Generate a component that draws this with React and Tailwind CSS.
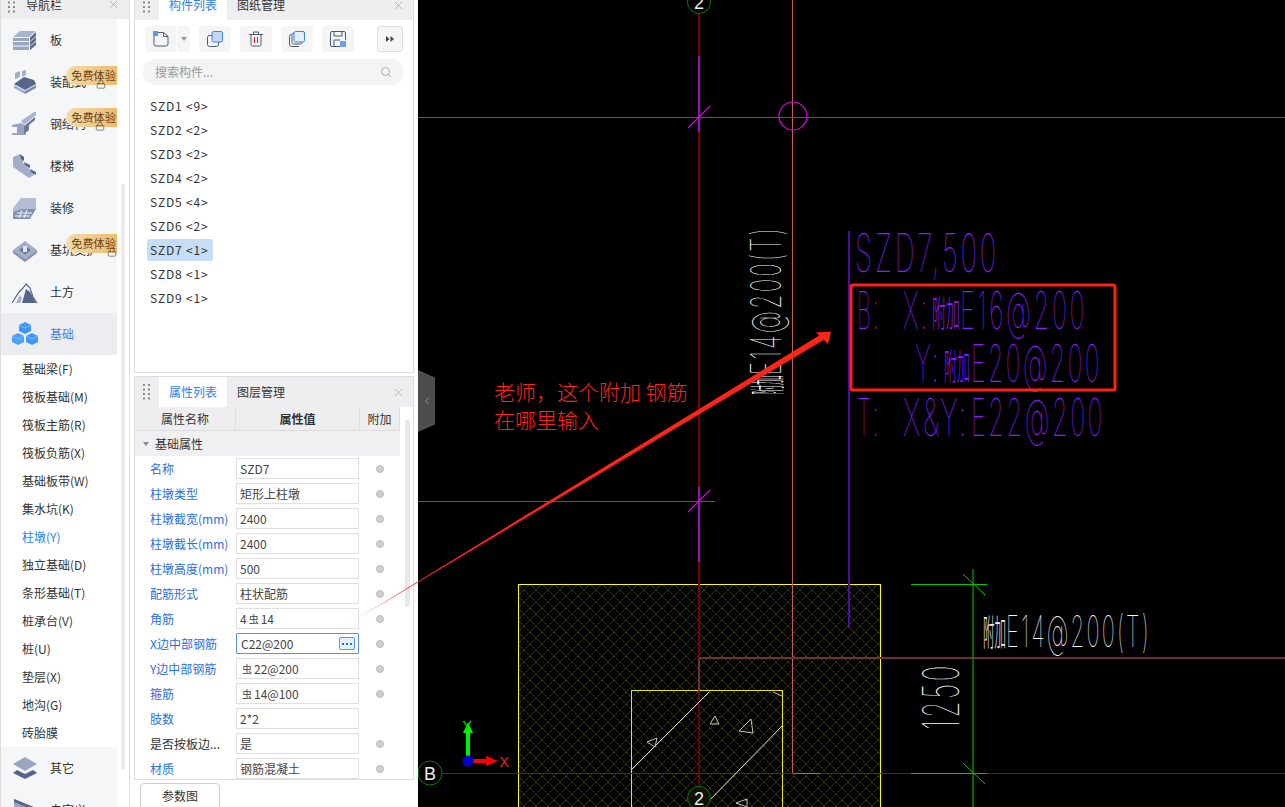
import React from "react";
import { Search, X, ChevronLeft, Lock } from "lucide-react";

const Grip = () => (
  <svg width="8" height="16" viewBox="0 0 8 16" className="shrink-0">
    {[1, 5.5, 10, 14.5].map((y) =>
      [1, 6].map((x) => <rect key={x + "-" + y} x={x} y={y - 1} width="2" height="2" fill="#8a8a8a" />)
    )}
  </svg>
);

const Ico = ({ children }) => (
  <svg width="26" height="24" viewBox="0 0 26 24" className="shrink-0">{children}</svg>
);

const icons = {
  slab: (
    <Ico>
      <path d="M1 9 L8 3 H24 L17 9Z" fill="#a9b3cd" />
      <path d="M1 10H17V13H1ZM1 14H17V17.5H1ZM1 18.5H17V22H1Z" fill="#9aa5c2" />
      <path d="M18 9.5 L24 4V8L18 13.5ZM18 14L24 9V12.5L18 18ZM18 18.5L24 13.500V17L18 22Z" fill="#5e6c92" />
    </Ico>
  ),
  prefab: (
    <Ico>
      <path d="M3 3 L8 1 V7 L3 9ZM10 1 L14 0 V5 L10 7Z" fill="#a4aec9" />
      <path d="M2 14 L12 7 L22 10 L24 14 L13 20Z" fill="#56658c" />
      <path d="M2 15 L13 21 V24 L2 18Z" fill="#a4aec9" />
      <path d="M13 21 L24 15 V18 L13 24Z" fill="#7f8cae" />
    </Ico>
  ),
  steel: (
    <Ico>
      <path d="M9 9 L22 0 H24 L24 3 L12 13 Z" fill="#aab4cd" />
      <path d="M0 13 L9 11 L12 13 V21 H14 L14 23 H0 V21 H5 V15 H0Z" fill="#98a3c0" />
      <path d="M12 14 L23 5 V8 L17 13 V18 L12 22Z" fill="#6b7899" />
    </Ico>
  ),
  stairs: (
    <Ico>
      <path d="M1 3 L8 0 L11 5 L11 9 L17 12 V15 L22 18 V21 L17 24 L1 13Z" fill="#a4aec9" />
      <path d="M8 0 L12 3 V7 L9 5ZM12 8 L18 11 V14 L13 11ZM18 15 L24 18 V21 L19 18Z" fill="#56658c" />
    </Ico>
  ),
  finish: (
    <Ico>
      <path d="M9 2 H24 V14 H10 L1 20 V12 Z" fill="#b3bcd3" />
      <path d="M1 16 L10 13 H24 L18 23 H1Z" fill="#8490b0" />
      <path d="M5 17 H20 M3 20 H18 M10 14 L7 22 M15 14 L12 22" stroke="#f5f6f8" strokeWidth="1" fill="none" />
    </Ico>
  ),
  pit: (
    <Ico>
      <path d="M1 12 L13 3 L25 12 L13 21Z" fill="#a4aec9" />
      <path d="M1 12 V15 L13 24 V21ZM25 12 V15 L13 24 V21Z" fill="#8591b2" />
      <path d="M7 12 L13 7.500 L19 12 L13 16.500Z" fill="#6a7799" />
      <path d="M11 8 H15 V14 H11Z" fill="#dfe3ec" />
    </Ico>
  ),
  earth: (
    <Ico>
      <path d="M0 23 L7 12 L11 8 L14 4 L18 8 L21 17 L25 23" fill="none" stroke="#56658c" strokeWidth="1.2" />
      <path d="M10 23 L14 9 L18 12 L24 23Z" fill="#56658c" />
      <path d="M4 23 L8 15 L10 18 L8 23Z" fill="#a4aec9" />
    </Ico>
  ),
  base: (
    <Ico>
      <path d="M13 0 L19 3 V9 L13 12 L7 9 V3Z" fill="#3f95ff" />
      <path d="M6 11 L12 14 V20 L6 23 L0 20 V14Z" fill="#4aa0ff" />
      <path d="M20 11 L26 14 V20 L20 23 L14 20 V14Z" fill="#3f95ff" />
      <path d="M7 3 L13 6 L19 3 M0 14 L6 17 L12 14 M14 14 L20 17 L26 14" stroke="#8cc4ff" strokeWidth="0.8" fill="none" />
    </Ico>
  ),
  other: (
    <Ico>
      <path d="M13 1 L25 8 L13 15 L1 8Z" fill="#9aa5c2" />
      <path d="M5 14 L13 18 L21 14 L25 17 L13 23 L1 17Z" fill="#56658c" />
    </Ico>
  ),
  custom: (
    <Ico>
      <path d="M2 1 L24 10 V24 H2Z" fill="#9aa5c2" />
      <path d="M2 1 L24 10 V13 L2 4Z" fill="#56658c" />
    </Ico>
  ),
};

const Badge = ({ top, lockLeft, lockTop }) => (
  <>
    <span className="absolute left-[65px] w-[51px] h-[19px] pr-[1px] rounded-l-[10px] bg-gradient-to-r from-[#f2dcae] to-[#ecba6c] text-[11.2px] leading-[19px] text-[#6b4310] text-right whitespace-nowrap overflow-hidden" style={{ top }}>
      免费体验
    </span>
    <span className="absolute w-[9px] h-[10px] text-[#444]" style={{ left: lockLeft, top: lockTop }}>
      <Lock size={10} strokeWidth={1.5} />
    </span>
  </>
);

const NavRow = ({ icon, label, active }) => (
  <div className={"flex items-center h-[42px] w-[116px] pl-[11px] gap-[12px] text-[12px] " + (active ? "bg-[#ecedf0] text-[#4a7fe8]" : "bg-[#f5f6f8] text-[#333]")}>
    {icons[icon]}
    <span className="whitespace-nowrap leading-[16px]">{label}</span>
  </div>
);

const subItems = ["基础梁(F)", "筏板基础(M)", "筏板主筋(R)", "筏板负筋(X)", "基础板带(W)", "集水坑(K)", "柱墩(Y)", "独立基础(D)", "条形基础(T)", "桩承台(V)", "桩(U)", "垫层(X)", "地沟(G)", "砖胎膜"];

const Header = ({ a, b }) => (
  <div className="flex items-center h-[30px] bg-[#eeeef0] shrink-0">
    <div className="pl-[7px] w-[24px]"><Grip /></div>
    <div className="w-[68px] h-full bg-white text-[#2f80ed] text-[12px] leading-[30px] text-center">{a}</div>
    <div className="ml-[10px] text-[12px] text-[#333] leading-[30px]">{b}</div>
    <X size={13} strokeWidth={1.2} className="ml-auto mr-[8px] text-[#999]" />
  </div>
);

const TB = ({ children }) => (
  <div className="w-[32px] h-[26px] rounded-[4px] bg-[#f5f5f5] flex items-center justify-center">{children}</div>
);

const list = ["SZD1 <9>", "SZD2 <2>", "SZD3 <2>", "SZD4 <2>", "SZD5 <4>", "SZD6 <2>", "SZD7 <1>", "SZD8 <1>", "SZD9 <1>"];

const Rebar = () => <span className="inline-block text-[10px] leading-[10px] align-[3px] mx-[2px]">虫</span>;

const rows = [
  ["名称", "SZD7", 1, 1],
  ["柱墩类型", "矩形上柱墩", 1, 1],
  ["柱墩截宽(mm)", "2400", 1, 1],
  ["柱墩截长(mm)", "2400", 1, 1],
  ["柱墩高度(mm)", "500", 1, 1],
  ["配筋形式", "柱状配筋", 1, 1],
  ["角筋", <>4<Rebar />14</>, 1, 1],
  ["X边中部钢筋", "C22@200", 1, 1, true],
  ["Y边中部钢筋", <><Rebar />22@200</>, 1, 1],
  ["箍筋", <><Rebar />14@100</>, 1, 1],
  ["肢数", "2*2", 1, 0],
  ["是否按板边...", "是", 0, 1],
  ["材质", "钢筋混凝土", 1, 1],
];

const Row = ({ r }) => (
  <div className="flex items-center h-[25px] shrink-0">
    <div className={"w-[101px] pl-[15px] text-[12px] whitespace-nowrap " + (r[2] ? "text-[#2b6fe0]" : "text-[#333]")}>{r[0]}</div>
    {r[4] ? (
      <div className="w-[123px] h-[21px] border border-[#5b8fe0] flex items-center pl-[4px] pr-[3px] text-[12px] text-[#444] rounded-[1px]">
        <span>{r[1]}</span>
        <span className="ml-auto w-[16px] h-[13px] border border-[#5b9be8] bg-[#e6f0fc] rounded-[2px] flex items-center justify-center gap-[2px]">
          <span className="w-[2px] h-[2px] bg-[#2f6fd0]" />
          <span className="w-[2px] h-[2px] bg-[#2f6fd0]" />
          <span className="w-[2px] h-[2px] bg-[#2f6fd0]" />
        </span>
      </div>
    ) : (
      <div className="w-[123px] h-[21px] border border-[#e0e0e0] flex items-center pl-[3px] text-[12px] text-[#444]">{r[1]}</div>
    )}
    <div className="w-[41px] flex justify-center">
      {r[3] ? <span className="w-[8px] h-[8px] rounded-full bg-[#cfcfcf] border border-[#bbb]" /> : null}
    </div>
  </div>
);

const CT = ({ x, y, w, size, fill, children, rot }) => (
  <text
    x={rot ? 0 : x}
    y={rot ? 0 : y}
    transform={rot ? `translate(${x} ${y}) rotate(-90)` : undefined}
    textLength={w}
    lengthAdjust="spacingAndGlyphs"
    letterSpacing={size * 0.1}
    fontFamily="Inter, Roboto, sans-serif"
    fontWeight="100"
    fontSize={size}
    fill={fill}
  >
    {children}
  </text>
);

const CJK = ({ x, y, w, size, fill, rot }) => (
  <text
    x={rot ? 0 : x}
    y={rot ? 0 : y}
    transform={rot ? `translate(${x} ${y}) rotate(-90)` : undefined}
    textLength={w}
    lengthAdjust="spacingAndGlyphs"
    fontFamily="'Noto Sans CJK SC', sans-serif"
    fontWeight="300"
    fontSize={size}
    fill={fill}
  >
    附加
  </text>
);

const P = "#8a1cff";
const W = "#f4f4f4";
const Canvas = () => (
  <svg width="867" height="807" viewBox="418 0 867 807" className="block shrink-0 bg-black">
    <defs>
      <pattern id="hatch" width="12" height="12" patternUnits="userSpaceOnUse" x="518" y="584">
        <path d="M0 0L12 12M12 0L0 12" stroke="#4a4a00" strokeWidth="1" strokeDasharray="1.4 0.7" fill="none" />
      </pattern>
    </defs>
    <rect x="518.500" y="584.500" width="362" height="240" fill="url(#hatch)" stroke="#ffff00" />
    <rect x="631.500" y="690.500" width="151" height="140" fill="none" stroke="#e8e800" />
    <path d="M699 0V690" stroke="#7a0000" strokeWidth="2" />
    <path d="M699 690V790" stroke="#8a0000" strokeWidth="1.500" />
    <path d="M699 56V132M699 487V562" stroke="#9a0cc0" strokeWidth="2" />
    <path d="M792.500 0V773" stroke="#bd5f5f" strokeWidth="1" />
    <path d="M418 117.500H1285" stroke="#c010c0" strokeWidth="1" />
    <path d="M418 501.500H715" stroke="#c010c0" strokeWidth="1" />
    <circle cx="793" cy="116" r="14" fill="none" stroke="#e000e0" strokeWidth="1.200" />
    <path d="M688 128L710 106M688 512L710 490" stroke="#e000e0" strokeWidth="1.300" />
    <path d="M699 658H1285M699 658V690" stroke="#6e3030" strokeWidth="2" fill="none" />
    <path d="M418 773.500H1285" stroke="#a00808" strokeWidth="1" />
    <path d="M793 773.500H820" stroke="#bd5f5f" strokeWidth="1" />
    <path d="M849 231V628" stroke="#4a0da0" strokeWidth="2" />
    <circle cx="699" cy="2" r="11.500" fill="#000" stroke="#0a7a0a" />
    <text x="699" y="9" textAnchor="middle" fontFamily="Liberation Sans" fontSize="18" fill="#eee">2</text>
    <circle cx="430" cy="773" r="12" fill="#000" stroke="#0a7a0a" />
    <text x="430" y="780" textAnchor="middle" fontFamily="Liberation Sans" fontSize="18" fill="#eee">B</text>
    <path d="M632 769L709 692M703 807L782 726" stroke="#dcdcdc" strokeWidth="1" />
    <path d="M647 742L657 738L655 747ZM715 716L719 724L710 724ZM751 719L753 733L739 731ZM773 692L782 696M736 803L747 799L747 807Z" fill="none" stroke="#c8c8c8" strokeWidth="1" />
    <circle cx="699" cy="798" r="11.500" fill="#111100" stroke="#0a7a0a" />
    <text x="699" y="805" textAnchor="middle" fontFamily="Liberation Sans" fontSize="18" fill="#eee">2</text>
    <CT x={855} y={272} w={144} size={53} fill={P}>SZD7,500</CT>
    <CT x={857} y={329} w={24} size={52} fill={P}>B:</CT>
    <CT x={903} y={329} w={27} size={52} fill={P}>X:</CT>
    <CJK x={932} y={327} w={28} size={36} fill={P} />
    <CT x={960} y={329} w={127} size={52} fill={P}>E16@200</CT>
    <CT x={915} y={382} w={26} size={52} fill={P}>Y:</CT>
    <CJK x={944} y={380} w={26} size={36} fill={P} />
    <CT x={971} y={382} w={131} size={52} fill={P}>E20@200</CT>
    <CT x={857} y={436} w={24} size={52} fill={P}>T:</CT>
    <CT x={903} y={436} w={66} size={52} fill={P}>X&amp;Y:</CT>
    <CT x={971} y={436} w={134} size={52} fill={P}>E22@200</CT>
    <CJK x={781} y={395} w={20} size={36} fill={W} rot />
    <CT x={781} y={375} w={149} size={42} fill={W} rot>E14@200(T)</CT>
    <CJK x={983} y={646} w={23} size={36} fill={W} />
    <CT x={1006} y={647} w={145} size={44} fill={W}>E14@200(T)</CT>
    <CT x={959} y={730} w={67} size={50} fill={W} rot>1250</CT>
    <path d="M973 569V807" stroke="#00c800" strokeWidth="1" />
    <path d="M911 584.500H987M911 773.500H987" stroke="#00c800" strokeWidth="1" />
    <path d="M963 574L985 595M963 763L985 784" stroke="#00c800" strokeWidth="1" />
    <path d="M468 760V733" stroke="#00f000" strokeWidth="4" />
    <path d="M468 732L463 743H473Z" fill="#00f000" transform="translate(0 -10)" />
    <path d="M468 761H487" stroke="#ff0000" strokeWidth="4" />
    <path d="M486 756L498 761L486 766Z" fill="#ff0000" />
    <circle cx="468" cy="761" r="5.500" fill="#0000c8" />
    <text x="462.500" y="731" fontFamily="Liberation Sans" fontSize="14" fill="#00e000">Y</text>
    <text x="499.500" y="767" fontFamily="Liberation Sans" fontSize="14" fill="#ff2020">X</text>
    <text x="494" y="400" fontFamily="'Noto Sans CJK SC', sans-serif" fontWeight="300" fontSize="21" fill="#ff2418">老师，这个附加 钢筋</text>
    <text x="494" y="428" fontFamily="'Noto Sans CJK SC', sans-serif" fontWeight="300" fontSize="21" fill="#ff2418">在哪里输入</text>
    <rect x="851" y="285" width="264" height="105" rx="2" fill="none" stroke="#ff2212" strokeWidth="3" />
  </svg>
);

export default function App() {
  return (
    <div className="relative flex w-[1285px] h-[807px] overflow-hidden bg-white font-['Noto_Sans_CJK_SC','Liberation_Sans',sans-serif]">
      <div className="relative w-[130px] h-[817px] -mt-[10px] shrink-0 border-r border-[#ddd] border-l">
        <div className="flex items-center h-[29px] bg-[#eeeef0]">
          <div className="pl-[6px] w-[25px]"><Grip /></div>
          <span className="text-[12px] text-[#333]">导航栏</span>
          <X size={13} strokeWidth={1.2} className="ml-auto mr-[9px] text-[#999]" />
        </div>
        <NavRow icon="slab" label="板" />
        <NavRow icon="prefab" label="装配式" />
        <NavRow icon="steel" label="钢结构" />
        <NavRow icon="stairs" label="楼梯" />
        <NavRow icon="finish" label="装修" />
        <NavRow icon="pit" label="基坑支护" />
        <NavRow icon="earth" label="土方" />
        <NavRow icon="base" label="基础" active />
        {subItems.map((s) => (
          <div key={s} className={"h-[28px] pl-[21px] text-[12px] leading-[28px] " + (s === "柱墩(Y)" ? "text-[#1a86f0]" : "text-[#333]")}>{s}</div>
        ))}
        <NavRow icon="other" label="其它" />
        <NavRow icon="custom" label="自定义" />
        <Badge top={76} lockLeft={95} lockTop={89} />
        <Badge top={118} lockLeft={94} lockTop={131} />
        <Badge top={244} lockLeft={106} lockTop={257} />
        <div className="absolute left-[120px] top-[194px] w-[4px] h-[586px] rounded-full bg-[#ebebeb]" />
      </div>

      <div className="flex flex-col w-[280px] h-[818px] -mt-[11px] ml-[4px] shrink-0">
        <div className="relative h-[384px] border border-[#ddd] flex flex-col shrink-0">
          <Header a="构件列表" b="图纸管理" />
          <div className="flex items-center h-[26px] mt-[6px] pl-[10px] pr-[10px] gap-[9px]">
            <div className="flex w-[45px] h-[26px] rounded-[4px] bg-[#f5f5f5]">
              <div className="w-[32px] flex items-center justify-center border-r border-white">
                <svg width="16" height="16" viewBox="0 0 16 16">
                  <path d="M5 1.500H10.500L15 5.500V13A2 2 0 0 1 13 15H3A2 2 0 0 1 1 13V5" fill="none" stroke="#4a5a78" />
                  <path d="M10.500 1.500V5.500H15" fill="none" stroke="#4a5a78" />
                  <path d="M0 0h5v5H0z" fill="#5b9bec" />
                </svg>
              </div>
              <div className="flex-1 flex items-center justify-center">
                <span className="w-0 h-0 border-x-[3px] border-x-transparent border-t-[4px] border-t-[#999]" />
              </div>
            </div>
            <TB>
              <svg width="16" height="16" viewBox="0 0 16 16">
                <rect x="0.500" y="4.500" width="11" height="11" rx="2" fill="none" stroke="#4a5a78" />
                <rect x="5" y="0.500" width="10.500" height="10.500" rx="1.500" fill="#c5d9f5" stroke="#3f85e0" />
              </svg>
            </TB>
            <TB>
              <svg width="14" height="16" viewBox="0 0 14 16">
                <path d="M0 3.500H14M4.500 3V1H9.500V3" fill="none" stroke="#4a5a78" />
                <path d="M2 4V13.500A1.500 1.500 0 0 0 3.500 15H10.500A1.500 1.500 0 0 0 12 13.500V4" fill="none" stroke="#4a5a78" />
                <path d="M5.500 6V12M8.500 6V12" stroke="#e02020" />
              </svg>
            </TB>
            <TB>
              <svg width="16" height="16" viewBox="0 0 16 16">
                <path d="M2.500 3.500A2 2 0 0 0 .5 5.500V13A2.500 2.500 0 0 0 3 15.500H10" fill="none" stroke="#4a5a78" />
                <rect x="3" y="2" width="10" height="11" rx="1.500" fill="none" stroke="#4a5a78" />
                <rect x="5" y="0.500" width="10.500" height="10.500" rx="1.500" fill="#e4eefb" stroke="#3f85e0" />
              </svg>
            </TB>
            <TB>
              <svg width="16" height="16" viewBox="0 0 16 16">
                <path d="M10 15.500H2A1.500 1.500 0 0 1 .5 14V2A1.500 1.500 0 0 1 2 .5H14A1.500 1.500 0 0 1 15.500 2V9" fill="none" stroke="#4a5a78" />
                <path d="M4 1V5H12V1M4 15V9H10" fill="none" stroke="#4a5a78" />
                <rect x="10" y="10" width="6" height="6" fill="#6aa3ea" />
              </svg>
            </TB>
            <div className="ml-auto w-[26px] h-[26px] rounded-[3px] border border-[#ddd] bg-[#f5f5f5] flex items-center justify-center">
              <svg width="8" height="6" viewBox="0 0 8 6"><path d="M0 0L3.500 3L0 6ZM4.500 0L8 3L4.500 6Z" fill="#444" /></svg>
            </div>
          </div>
          <div className="flex items-center h-[26px] ml-[8px] mr-[9px] mt-[7px] px-[12px] rounded-full bg-[#f4f4f4] text-[12px] text-[#999]">
            <span>搜索构件...</span>
            <Search size={12} className="ml-auto text-[#aaa]" />
          </div>
          <div className="mt-[9px]">
            {list.map((s) => (
              <div key={s} className="h-[24px] pl-[15px] flex items-center text-[12px] text-[#333] tracking-[0.8px] whitespace-pre">
                <span className={s.startsWith("SZD7") ? "bg-[#c5ddf5] rounded-[3px] -ml-[3px] pl-[3px] pr-[5px] h-[22px] leading-[22px]" : ""}>{s}</span>
              </div>
            ))}
          </div>
        </div>

        <div className="relative mt-[3px] h-[404px] border border-[#ddd] flex flex-col overflow-hidden shrink-0">
          <Header a="属性列表" b="图层管理" />
          <div className="flex h-[24px] w-[265px] bg-[#eeeef0] border-b border-[#ddd] text-[12px] text-[#333] leading-[23px] text-center shrink-0">
            <div className="w-[101px] border-r border-[#ddd]">属性名称</div>
            <div className="w-[124px] border-r border-[#ddd] font-bold">属性值</div>
            <div className="w-[40px] border-r border-[#ddd]">附加</div>
          </div>
          <div className="flex items-center h-[25px] w-[265px] bg-[#f0f0f2] text-[12px] text-[#333] pl-[8px] gap-[6px] shrink-0">
            <span className="w-0 h-0 border-x-[3px] border-x-transparent border-t-[4px] border-t-[#888]" />
            基础属性
          </div>
          {rows.map((r, i) => <Row key={i} r={r} />)}
          <div className="absolute left-[270px] top-[43px] w-[5px] h-[187px] rounded-full bg-[#e8e8e8]" />
        </div>
        <div className="h-[27px] pl-[6px] pt-[3px] bg-white overflow-hidden shrink-0">
          <div className="w-[80px] h-[30px] border border-[#ccc] rounded-[4px] text-[12px] text-[#333] text-center leading-[24px]">参数图</div>
        </div>
      </div>

      <div className="w-[4px] shrink-0 bg-white" />
      <Canvas />

      <div className="absolute left-[418px] top-[370px] w-[17px] h-[62px] bg-[#4d4d4d] [clip-path:polygon(0_0,100%_12%,100%_88%,0_100%)] flex items-center justify-center text-[#aaa]">
        <ChevronLeft size={12} strokeWidth={1.5} />
      </div>

      <svg className="absolute left-0 top-0 pointer-events-none" width="1285" height="807" viewBox="0 0 1285 807">
        <defs>
          <linearGradient id="fade" gradientUnits="userSpaceOnUse" x1="340" y1="629" x2="440" y2="570">
            <stop offset="0" stopColor="#ff2418" stopOpacity="0" />
            <stop offset="0.6" stopColor="#ff2418" stopOpacity="0.8" />
            <stop offset="1" stopColor="#ff2418" />
          </linearGradient>
        </defs>
        <path d="M340 629L820 335L823.500 340Z" fill="url(#fade)" />
        <path d="M831 331.500L816 332.500L828 344Z" fill="#ff2418" />
      </svg>
    </div>
  );
}
